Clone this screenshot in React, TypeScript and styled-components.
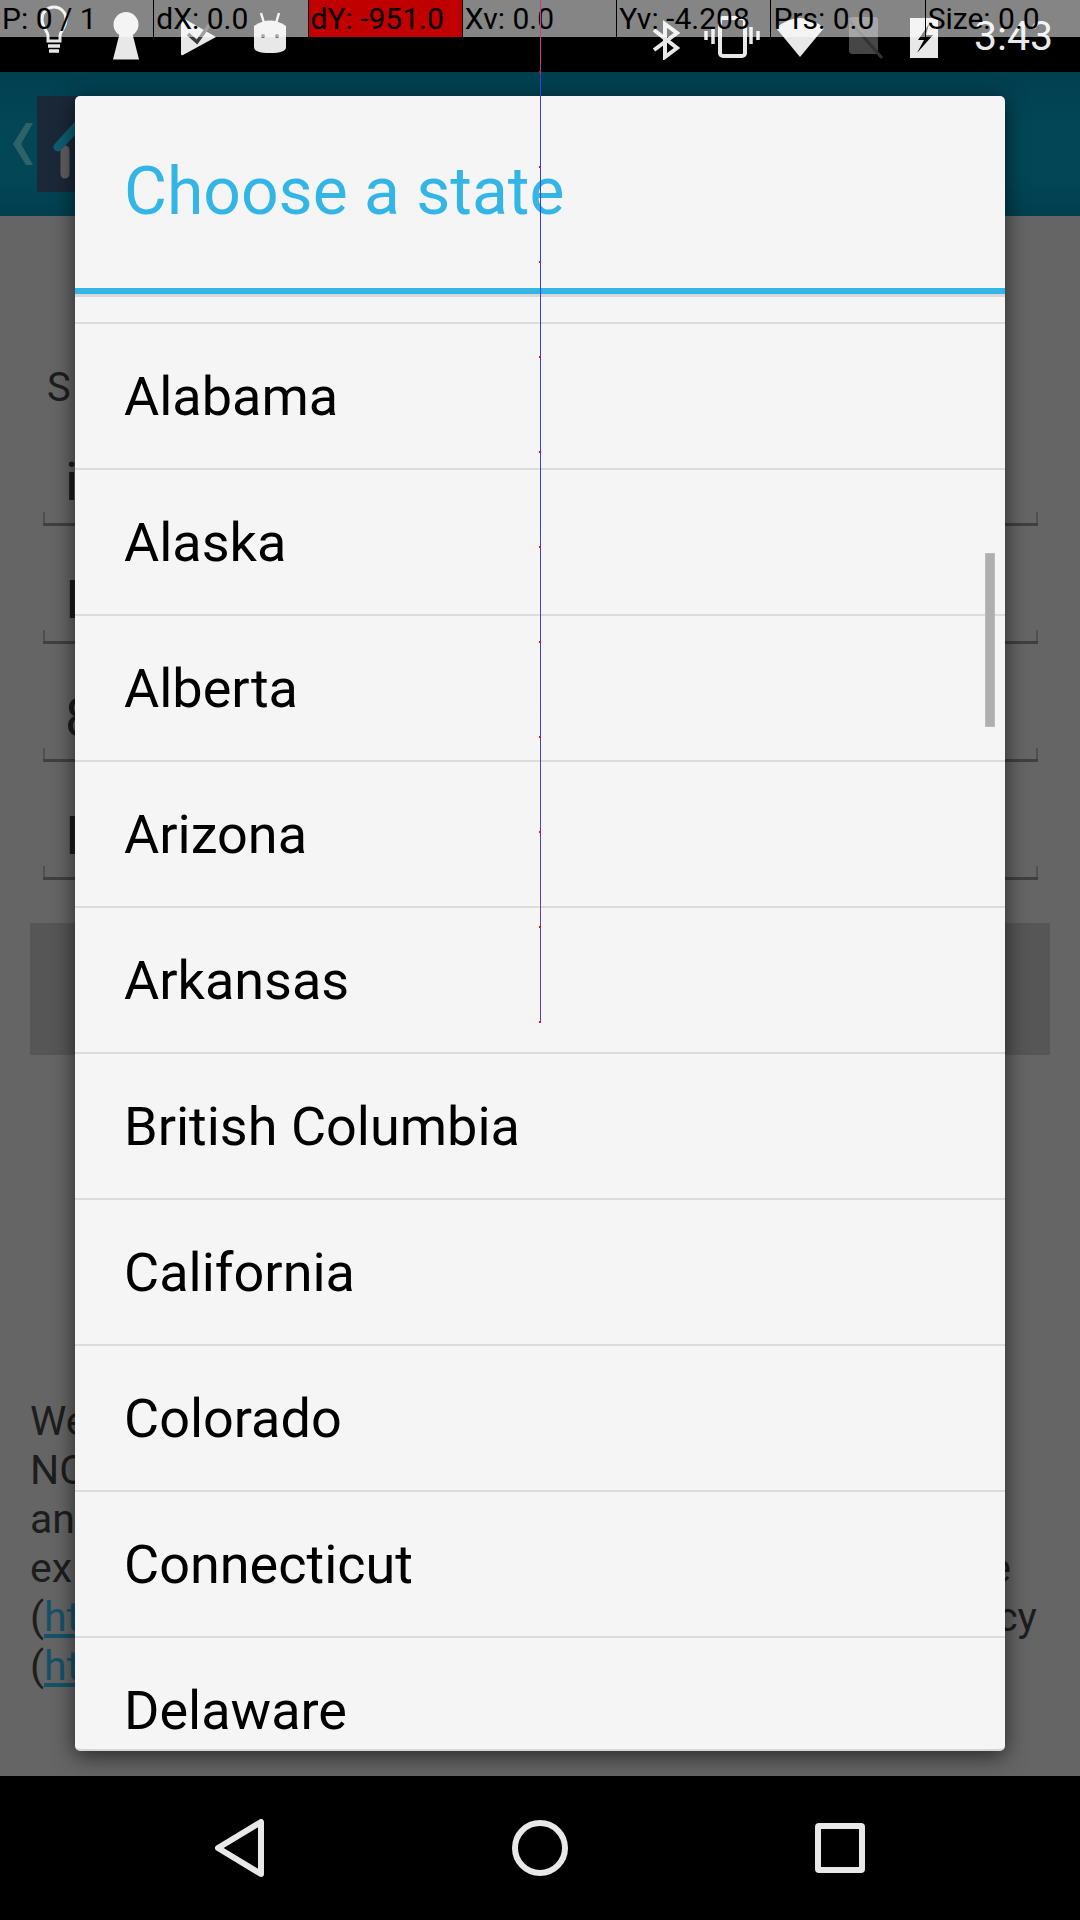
import React from "react";
import styled, { createGlobalStyle } from "styled-components";

const Global = createGlobalStyle`
  html, body { margin: 0; padding: 0; background: #000; }
  body { font-family: Roboto, "Liberation Sans", sans-serif; }
`;

const Screen = styled.div`
  position: relative;
  width: 1080px;
  height: 1920px;
  overflow: hidden;
  display: flex;
  flex-direction: column;
  background: #656565;
`;

/* ---------- status bar ---------- */
const StatusBar = styled.div`
  height: 72px;
  flex: none;
  background: #000;
  display: flex;
  align-items: flex-start;
  justify-content: space-between;
  padding: 0 27px 0 18px;
  color: #e8e8e8;
`;
const IconGroup = styled.div`
  display: flex;
  align-items: flex-start;
`;
const Slot = styled.div<{ $w: number }>`
  width: ${(p) => p.$w}px;
  height: 72px;
  display: flex;
  align-items: flex-start;
  justify-content: center;
  flex: none;
`;
const Clock = styled.div`
  font-size: 41px;
  line-height: 72px;
  margin-left: 22px;
  color: #e8e8e8;
`;

/* ---------- pointer location overlay ---------- */
const PointerBar = styled.div`
  position: absolute;
  left: 0;
  top: 0;
  width: 1080px;
  height: 37px;
  display: grid;
  grid-template-columns: repeat(7, 1fr);
  background: rgba(255, 255, 255, 0.52);
`;
const PointerCell = styled.div<{ $alert?: boolean }>`
  font-size: 30px;
  line-height: 37px;
  color: #000;
  padding-left: 2px;
  white-space: nowrap;
  overflow: hidden;
  box-sizing: border-box;
  border-right: 1px solid #000;
  background: ${(p) => (p.$alert ? "#c00000" : "transparent")};
  &:last-child { border-right: 0; }
`;
const TraceLine = styled.div`
  position: absolute;
  left: 540px;
  top: 0;
  width: 1px;
  height: 1022px;
  background: linear-gradient(
    to bottom,
    #d43a80 0,
    #c0408c 60px,
    #2f41e0 80px,
    #3a3fd8 380px,
    #6a3f9c 1022px
  );
`;
const TraceDot = styled.div`
  position: absolute;
  left: 539px;
  width: 2px;
  height: 2px;
  background: #e0102a;
`;

/* ---------- page under the dialog ---------- */
const Page = styled.div`
  flex: 1;
  min-height: 0;
  display: flex;
  flex-direction: column;
`;
const Header = styled.div`
  height: 144px;
  flex: none;
  background: linear-gradient(to bottom, #023f4f 0, #034757 40%, #034757 70%, #023f4f 100%);
  display: flex;
  align-items: center;
  padding-left: 13px;
  gap: 4px;
`;
const LogoBox = styled.div`
  width: 60px;
  height: 96px;
  background: #1b2838;
`;
const Content = styled.div`
  padding: 0 30px;
  display: flex;
  flex-direction: column;
`;
const SectionLabel = styled.div`
  height: 192px;
  margin: 0 12px 0 13px;
  display: flex;
  align-items: flex-end;
  padding-left: 4px;
  font-size: 40px;
  line-height: 40px;
  color: #1d1d1d;
`;
const Field = styled.div`
  position: relative;
  height: 118px;
  margin: 0 12px 0 13px;
  box-sizing: border-box;
  display: flex;
  align-items: flex-end;
  padding: 0 0 14px 22px;
  font-size: 54px;
  line-height: 54px;
  color: #1c1c1c;
  border-bottom: 3px solid #404040;
  &::before,
  &::after {
    content: "";
    position: absolute;
    bottom: 0;
    width: 2px;
    height: 11px;
    background: #505050;
  }
  &::before { left: 0; }
  &::after { right: 0; }
`;
const SubmitButton = styled.div`
  height: 132px;
  margin-top: 43px;
  background: #565656;
`;
const Legal = styled.div`
  margin-top: 342px;
  font-size: 41px;
  line-height: 49px;
  color: #1d1d1d;
`;
const LegalLine = styled.div<{ $inset?: number }>`
  display: flex;
  justify-content: space-between;
  height: 49px;
  padding-right: ${(p) => p.$inset ?? 0}px;
`;
const LegalLink = styled.span`
  color: #14526a;
  text-decoration: underline;
`;

/* ---------- navigation bar ---------- */
const NavBar = styled.div`
  height: 144px;
  flex: none;
  background: #000;
  display: grid;
  grid-template-columns: repeat(3, 300px);
  padding: 0 90px;
  align-items: center;
  justify-items: center;
`;

/* ---------- dialog ---------- */
const Dialog = styled.div`
  position: absolute;
  left: 75px;
  top: 96px;
  width: 930px;
  height: 1655px;
  box-sizing: border-box;
  background: #f5f5f5;
  border-radius: 5px;
  border-bottom: 2px solid #d6d6d6;
  box-shadow: 0 5px 22px rgba(0, 0, 0, 0.62);
  display: flex;
  flex-direction: column;
  overflow: hidden;
`;
const DialogTitle = styled.div`
  height: 192px;
  flex: none;
  box-sizing: border-box;
  padding-left: 49px;
  font-size: 66px;
  line-height: 192px;
  color: #33b5e5;
`;
const TitleRule = styled.div`
  height: 6px;
  flex: none;
  background: #33b5e5;
  border-bottom: 3px solid #d8d8d8;
`;
const StateList = styled.div`
  flex: 1;
  min-height: 0;
  overflow: hidden;
`;
const StateRow = styled.div<{ $clipped?: boolean }>`
  height: 146px;
  box-sizing: border-box;
  margin-top: ${(p) => (p.$clipped ? "-119px" : "0")};
  padding-left: 49px;
  display: flex;
  align-items: center;
  border-bottom: 2px solid #dcdcdc;
  font-size: 54px;
  color: #000;
`;
const ScrollThumb = styled.div`
  position: absolute;
  left: 910px;
  top: 457px;
  width: 10px;
  height: 174px;
  box-sizing: border-box;
  background: #afafaf;
  border: 1px solid #bbbbbb;
`;

/* ---------- icons ---------- */
const Bulb = () => (
  <svg width="30" height="58" viewBox="0 0 30 58" fill="none" stroke="#e8e8e8">
    <path d="M9 41 L9 36 C9 31 3 28 3 19 A12 12 0 1 1 27 19 C27 28 21 31 21 36 L21 41 Z" strokeWidth="3" transform="translate(0 0)" />
    <path d="M9 46 H21 M10 51 H20" strokeWidth="3.5" />
  </svg>
);
const Keyhole = () => (
  <svg width="30" height="60" viewBox="0 0 30 60" fill="#e8e8e8">
    <circle cx="15" cy="24.5" r="12.5" />
    <path d="M9 32 H21 L28 59.5 H2 Z" />
  </svg>
);
const PlayStore = () => (
  <svg width="40" height="58" viewBox="0 0 40 58">
    <path d="M3 19 Q3 17 5 18 L38 37 L5 55 Q3 56 3 54 Z" fill="#e8e8e8" />
    <path d="M10 34 L19 42 L32 24" fill="none" stroke="#3a3a3a" strokeWidth="3.5" />
  </svg>
);
const Marshmallow = () => (
  <svg width="36" height="56" viewBox="0 0 36 56">
    <path d="M9 13 L12 23 M27 13 L24 23" stroke="#e8e8e8" strokeWidth="2.5" />
    <path d="M2 26 Q18 15 34 26 L34 47 Q34 53 18 53 Q2 53 2 47 Z" fill="#e8e8e8" />
    <circle cx="11" cy="36" r="2" fill="#555" />
    <circle cx="25" cy="36" r="2" fill="#555" />
  </svg>
);
const Bluetooth = () => (
  <svg width="30" height="60" viewBox="0 0 30 60" fill="none" stroke="#e8e8e8" strokeWidth="4">
    <path d="M3 30 L26 48 L14 57 V24 L26 33 L3 50" />
  </svg>
);
const Vibrate = () => (
  <svg width="56" height="60" viewBox="0 0 56 60" fill="none" stroke="#e8e8e8">
    <rect x="16" y="18" width="25" height="38" rx="3" strokeWidth="4" />
    <path d="M9 27 V44 M47 27 V44" strokeWidth="3.5" />
    <path d="M2 31 V40 M54 31 V40" strokeWidth="3.5" />
  </svg>
);
const Wifi = () => (
  <svg width="50" height="60" viewBox="0 0 50 60" fill="#e8e8e8">
    <path d="M1 28 Q25 8 49 28 L25 57 Z" />
  </svg>
);
const NoSim = () => (
  <svg width="36" height="60" viewBox="0 0 36 60">
    <path d="M5 17 H28 Q31 17 31 20 V50 Q31 54 28 54 H5 Q2 54 2 50 V20 Q2 17 5 17 Z" fill="#464646" />
    <path d="M0 18 L35 58" stroke="#333" strokeWidth="3" />
  </svg>
);
const Battery = () => (
  <svg width="30" height="60" viewBox="0 0 30 60">
    <rect x="1" y="18" width="28" height="40" fill="#e8e8e8" />
    <path d="M20 24 L9 40 H15 L8 53 L24 35 H17 Z" fill="#000" />
  </svg>
);
const Back = () => (
  <svg width="50" height="58" viewBox="0 0 50 58" fill="none" stroke="#e8e8e8" strokeWidth="6" strokeLinejoin="round">
    <path d="M46 3 V55 L3 29 Z" />
  </svg>
);
const Home = () => (
  <svg width="56" height="56" viewBox="0 0 56 56" fill="none" stroke="#e8e8e8" strokeWidth="6">
    <circle cx="28" cy="28" r="25" />
  </svg>
);
const Recents = () => (
  <svg width="50" height="50" viewBox="0 0 50 50" fill="none" stroke="#e8e8e8" strokeWidth="6" strokeLinejoin="round">
    <rect x="3" y="3" width="44" height="44" rx="1" />
  </svg>
);
const Chevron = () => (
  <svg width="20" height="42" viewBox="0 0 20 42" fill="#2f6169">
    <path d="M13 0 H20 L8 21 L20 42 H13 L0 21 Z" />
  </svg>
);
const HomeMark = () => (
  <svg width="60" height="96" viewBox="0 0 60 96" fill="none">
    <path d="M28 54 V78" stroke="#5f5f5f" strokeWidth="9" strokeLinecap="round" />
    <path d="M21 51 L40 30" stroke="#0d5f70" strokeWidth="9" strokeLinecap="round" />
  </svg>
);

const pointerCells = [
  { text: "P: 0 / 1" },
  { text: "dX: 0.0" },
  { text: "dY: -951.0", alert: true },
  { text: "Xv: 0.0" },
  { text: "Yv: -4.208" },
  { text: "Prs: 0.0" },
  { text: "Size: 0.0" },
];

const states = [
  "Alabama",
  "Alaska",
  "Alberta",
  "Arizona",
  "Arkansas",
  "British Columbia",
  "California",
  "Colorado",
  "Connecticut",
  "Delaware",
];

const traceDots = Array.from({ length: 11 }, (_, i) => 1021 - i * 95);

export default function App() {
  return (
    <>
      <Global />
      <Screen>
        <StatusBar>
          <IconGroup>
            <Slot $w={72}><Bulb /></Slot>
            <Slot $w={72}><Keyhole /></Slot>
            <Slot $w={72}><PlayStore /></Slot>
            <Slot $w={72}><Marshmallow /></Slot>
          </IconGroup>
          <IconGroup>
            <Slot $w={64}><Bluetooth /></Slot>
            <Slot $w={68}><Vibrate /></Slot>
            <Slot $w={68}><Wifi /></Slot>
            <Slot $w={62}><NoSim /></Slot>
            <Slot $w={56}><Battery /></Slot>
            <Clock>3:43</Clock>
          </IconGroup>
        </StatusBar>

        <Page>
          <Header>
            <Chevron />
            <LogoBox><HomeMark /></LogoBox>
          </Header>
          <Content>
            <SectionLabel>S</SectionLabel>
            <Field>i</Field>
            <Field>I</Field>
            <Field>8</Field>
            <Field>I</Field>
            <SubmitButton />
            <Legal>
              <LegalLine><span>We</span></LegalLine>
              <LegalLine><span>NC</span></LegalLine>
              <LegalLine><span>an</span></LegalLine>
              <LegalLine $inset={39}><span>ex</span><span>e</span></LegalLine>
              <LegalLine $inset={13}><span>(<LegalLink>ht</LegalLink></span><span>cy</span></LegalLine>
              <LegalLine><span>(<LegalLink>ht</LegalLink></span></LegalLine>
            </Legal>
          </Content>
        </Page>

        <NavBar>
          <Back />
          <Home />
          <Recents />
        </NavBar>

        <PointerBar>
          {pointerCells.map((c) => (
            <PointerCell key={c.text} $alert={c.alert}>{c.text}</PointerCell>
          ))}
        </PointerBar>

        <Dialog>
          <DialogTitle>Choose a state</DialogTitle>
          <TitleRule />
          <StateList>
            <StateRow $clipped />
            {states.map((s) => (
              <StateRow key={s}>{s}</StateRow>
            ))}
          </StateList>
          <ScrollThumb />
        </Dialog>

        <TraceLine />
        {traceDots.map((y) => (
          <TraceDot key={y} style={{ top: y }} />
        ))}
      </Screen>
    </>
  );
}
